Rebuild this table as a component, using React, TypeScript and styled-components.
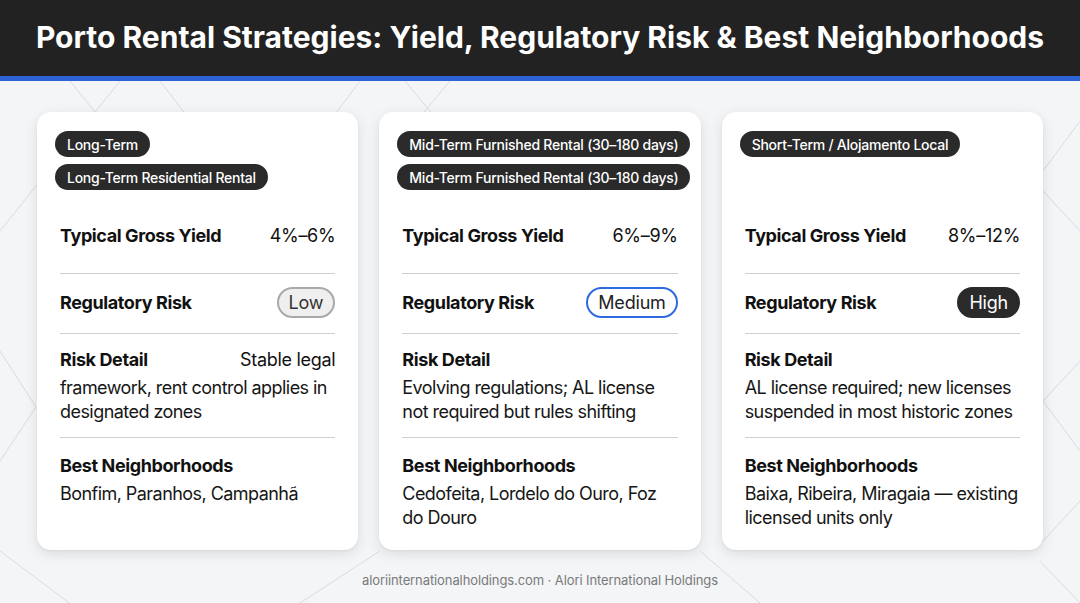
import React from "react";
import styled, { createGlobalStyle, css } from "styled-components";

const Global = createGlobalStyle`
  * { box-sizing: border-box; }
  html, body { margin: 0; padding: 0; }
  body {
    font-family: Inter, "Noto Sans", "Liberation Sans", sans-serif;
    background: #f3f5f7;
    color: #111;
  }
`;

const Page = styled.div`
  width: 1080px;
  height: 603px;
  display: flex;
  flex-direction: column;
  overflow: hidden;
  background: #f3f5f7;
`;

const Header = styled.header`
  height: 81px;
  flex: none;
  background: #222222;
  border-bottom: 5px solid #2e63d8;
  display: flex;
  align-items: center;
  justify-content: center;
  position: relative;
  z-index: 2;
`;

const Title = styled.h1`
  margin: 0;
  color: #fff;
  font-size: 30px;
  font-weight: 700;
  letter-spacing: 0;
  padding-bottom: 2px;
  white-space: nowrap;
`;

const Main = styled.main`
  position: relative;
  flex: 1;
  display: flex;
  flex-direction: column;
`;

const Backdrop = styled.svg`
  position: absolute;
  inset: 0;
  width: 100%;
  height: 100%;
  z-index: 0;
`;

const Grid = styled.div`
  position: relative;
  z-index: 1;
  display: grid;
  grid-template-columns: repeat(3, minmax(0, 1fr));
  gap: 21px;
  padding: 31px 37px 0;
`;

const Card = styled.section`
  background: #fff;
  border-radius: 14px;
  height: 438px;
  padding: 19px 18px;
  box-shadow: 0 4px 14px rgba(0, 0, 0, 0.1), 0 1px 3px rgba(0, 0, 0, 0.05);
  display: flex;
  flex-direction: column;
`;

const Tags = styled.div`
  display: flex;
  flex-direction: column;
  align-items: flex-start;
  gap: 7px;
  min-height: 59px;
  margin-bottom: 10px;
`;

const Tag = styled.span`
  display: inline-flex;
  align-items: center;
  height: 26px;
  padding: 0 12px;
  border-radius: 13px;
  background: #2a2a2a;
  color: #fff;
  font-size: 14px;
  font-weight: 500;
  letter-spacing: -0.25px;
  white-space: nowrap;
`;

const Rows = styled.div`
  padding: 0 5px;
  display: flex;
  flex-direction: column;
`;

const Row = styled.div<{ $pad: string; $last?: boolean }>`
  padding: ${(p) => p.$pad};
  border-bottom: ${(p) => (p.$last ? "none" : "1px solid #cfcfcf")};
`;

const Inline = styled.div`
  display: flex;
  align-items: center;
  justify-content: space-between;
  min-height: 24px;
`;

const Label = styled.div`
  font-size: 18px;
  font-weight: 700;
  line-height: 24px;
  letter-spacing: -0.4px;
`;

const Value = styled.div`
  font-size: 18px;
  font-weight: 400;
  line-height: 24px;
  letter-spacing: -0.3px;
`;

const Head = styled.div`
  display: flex;
  justify-content: space-between;
  align-items: baseline;
  margin-bottom: 4px;
`;

const Body = styled.div`
  font-size: 18px;
  line-height: 24px;
  letter-spacing: -0.55px;
  color: #161616;
`;

type Level = "low" | "medium" | "high";

const levelStyles = {
  low: css`
    background: #efefef;
    border-color: #a9a9a9;
    color: #333;
  `,
  medium: css`
    background: #fff;
    border-color: #2f6be0;
    color: #222;
  `,
  high: css`
    background: #2a2a2a;
    border-color: #2a2a2a;
    color: #fff;
  `,
};

const Badge = styled.span<{ $level: Level }>`
  display: inline-flex;
  align-items: center;
  height: 31px;
  padding: 0 10px;
  border-radius: 16px;
  border: 2px solid;
  font-size: 18px;
  letter-spacing: -0.2px;
  ${(p) => levelStyles[p.$level]}
`;

const Footer = styled.footer`
  position: relative;
  z-index: 1;
  text-align: center;
  font-size: 13px;
  color: #7a7a7a;
  margin-top: 22px;
  letter-spacing: -0.1px;
`;

type Strategy = {
  tags: string[];
  yield: string;
  level: Level;
  levelText: string;
  lead?: string;
  detail: string;
  hoods: string;
};

const data: Strategy[] = [
  {
    tags: ["Long-Term", "Long-Term Residential Rental"],
    yield: "4%–6%",
    level: "low",
    levelText: "Low",
    lead: "Stable legal",
    detail: "framework, rent control applies in designated zones",
    hoods: "Bonfim, Paranhos, Campanhã",
  },
  {
    tags: ["Mid-Term Furnished Rental (30–180 days)", "Mid-Term Furnished Rental (30–180 days)"],
    yield: "6%–9%",
    level: "medium",
    levelText: "Medium",
    detail: "Evolving regulations; AL license not required but rules shifting",
    hoods: "Cedofeita, Lordelo do Ouro, Foz do Douro",
  },
  {
    tags: ["Short-Term / Alojamento Local"],
    yield: "8%–12%",
    level: "high",
    levelText: "High",
    detail: "AL license required; new licenses suspended in most historic zones",
    hoods: "Baixa, Ribeira, Miragaia — existing licensed units only",
  },
];

const lines: [number, number, number, number][] = [
  [70, 0, 200, 160],
  [120, 0, 0, 150],
  [160, 0, 260, 130],
  [360, 0, 300, 80],
  [405, 0, 480, 90],
  [450, 0, 400, 60],
  [0, 270, 36, 326],
  [36, 326, 0, 380],
  [0, 470, 80, 530],
  [1080, 40, 1043, 90],
  [1043, 110, 1080, 150],
  [1043, 320, 1080, 280],
  [1043, 320, 1080, 370],
  [1043, 460, 1080, 420],
  [1040, 480, 1080, 522],
  [300, 522, 380, 470],
  [700, 470, 760, 522],
];

export default function App() {
  return (
    <>
      <Global />
      <Page>
        <Header>
          <Title>Porto Rental Strategies: Yield, Regulatory Risk &amp; Best Neighborhoods</Title>
        </Header>
        <Main>
          <Backdrop viewBox="0 0 1080 522" preserveAspectRatio="none">
            {lines.map(([x1, y1, x2, y2], i) => (
              <line key={i} x1={x1} y1={y1} x2={x2} y2={y2} stroke="#d8dce1" strokeWidth="1" />
            ))}
          </Backdrop>
          <Grid>
            {data.map((s, i) => (
              <Card key={i}>
                <Tags>
                  {s.tags.map((t, j) => (
                    <Tag key={j}>{t}</Tag>
                  ))}
                </Tags>
                <Rows>
                  <Row $pad="24px 0 25px">
                    <Inline>
                      <Label>Typical Gross Yield</Label>
                      <Value>{s.yield}</Value>
                    </Inline>
                  </Row>
                  <Row $pad="13px 0 15px">
                    <Inline>
                      <Label>Regulatory Risk</Label>
                      <Badge $level={s.level}>{s.levelText}</Badge>
                    </Inline>
                  </Row>
                  <Row $pad="14px 0 13px">
                    <Head>
                      <Label>Risk Detail</Label>
                      {s.lead && <Value>{s.lead}</Value>}
                    </Head>
                    <Body>{s.detail}</Body>
                  </Row>
                  <Row $pad="16px 0 0" $last>
                    <Head>
                      <Label>Best Neighborhoods</Label>
                    </Head>
                    <Body>{s.hoods}</Body>
                  </Row>
                </Rows>
              </Card>
            ))}
          </Grid>
          <Footer>aloriinternationalholdings.com · Alori International Holdings</Footer>
        </Main>
      </Page>
    </>
  );
}
